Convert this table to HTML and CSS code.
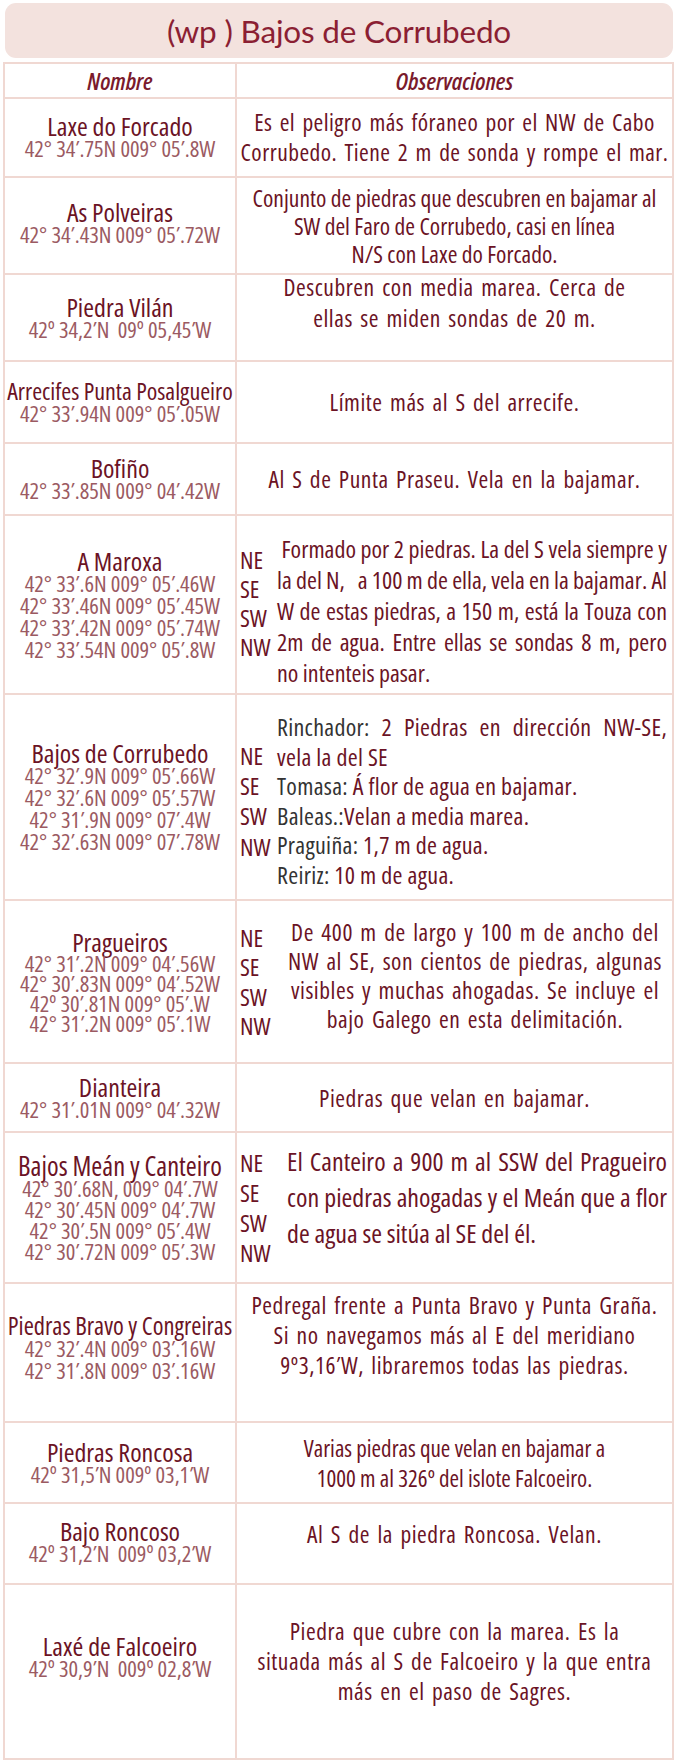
FILE: index.html
```html
<!DOCTYPE html>
<html lang="es">
<head>
<meta charset="utf-8">
<title>(wp ) Bajos de Corrubedo</title>
<link rel="stylesheet" href="styles.css">
</head>
<body>
<div class="page">
  <div class="title">(wp ) Bajos de Corrubedo</div>
  <div class="table">
    <div class="row head">
      <div class="cell name"><span class="hd">Nombre</span></div>
      <div class="cell obs center"><span class="hd">Observaciones</span></div>
    </div>

    <div class="row r1">
      <div class="cell name"><div class="nm">Laxe do Forcado</div><div class="co">42° 34′.75N 009° 05′.8W</div></div>
      <div class="cell obs center"><p>Es el peligro más fóraneo por el NW de Cabo<br>Corrubedo. Tiene 2 m de sonda y rompe el mar.</p></div>
    </div>

    <div class="row r2">
      <div class="cell name"><div class="nm">As Polveiras</div><div class="co">42° 34′.43N 009° 05′.72W</div></div>
      <div class="cell obs center"><p>Conjunto de piedras que descubren en bajamar al<br>SW del Faro de Corrubedo, casi en línea<br>N/S con Laxe do Forcado.</p></div>
    </div>

    <div class="row r3">
      <div class="cell name"><div class="nm">Piedra Vilán</div><div class="co">42º 34,2′N&nbsp; 09º 05,45′W</div></div>
      <div class="cell obs center top"><p>Descubren con media marea. Cerca de<br>ellas se miden sondas de 20 m.</p></div>
    </div>

    <div class="row r4">
      <div class="cell name"><div class="nm">Arrecifes Punta Posalgueiro</div><div class="co">42° 33′.94N 009° 05′.05W</div></div>
      <div class="cell obs center"><p>Límite más al S del arrecife.</p></div>
    </div>

    <div class="row r5">
      <div class="cell name"><div class="nm">Bofiño</div><div class="co">42° 33′.85N 009° 04′.42W</div></div>
      <div class="cell obs center"><p>Al S de Punta Praseu. Vela en la bajamar.</p></div>
    </div>

    <div class="row r6">
      <div class="cell name"><div class="nm">A Maroxa</div><div class="co">42° 33′.6N 009° 05′.46W<br>42° 33′.46N 009° 05′.45W<br>42° 33′.42N 009° 05′.74W<br>42° 33′.54N 009° 05′.8W</div></div>
      <div class="cell obs split">
        <div class="dirs d6">NE<br>SE<br>SW<br>NW</div>
        <div class="txt t6">
          <span class="ln j">&nbsp;Formado por 2 piedras. La del S vela siempre y</span>
          <span class="ln j ws">la del N,&nbsp;&nbsp; a 100 m de ella, vela en la bajamar. Al</span>
          <span class="ln j">W de estas piedras, a 150 m, está la Touza con</span>
          <span class="ln j">2m de agua. Entre ellas se sondas 8 m, pero</span>
          <span class="ln">no intenteis pasar.</span>
        </div>
      </div>
    </div>

    <div class="row r7">
      <div class="cell name"><div class="nm">Bajos de Corrubedo</div><div class="co">42° 32′.9N 009° 05′.66W<br>42° 32′.6N 009° 05′.57W<br>42° 31′.9N 009° 07′.4W<br>42° 32′.63N 009° 07′.78W</div></div>
      <div class="cell obs split">
        <div class="dirs d7">NE<br>SE<br>SW<br>NW</div>
        <div class="txt t7">
          <span class="ln j"><span class="lab">Rinchador:</span> 2 Piedras en dirección NW-SE,</span>
          <span class="ln">vela la del SE</span>
          <span class="ln"><span class="lab">Tomasa:</span> Á flor de agua en bajamar.</span>
          <span class="ln"><span class="lab">Baleas.:</span>Velan a media marea.</span>
          <span class="ln"><span class="lab">Praguiña:</span> 1,7 m de agua.</span>
          <span class="ln"><span class="lab">Reiriz:</span> 10 m de agua.</span>
        </div>
      </div>
    </div>

    <div class="row r8">
      <div class="cell name"><div class="nm">Pragueiros</div><div class="co">42° 31′.2N 009° 04′.56W<br>42° 30′.83N 009° 04′.52W<br>42º 30′.81N 009° 05′.W<br>42° 31′.2N 009° 05′.1W</div></div>
      <div class="cell obs split">
        <div class="dirs d8">NE<br>SE<br>SW<br>NW</div>
        <div class="txt t8">De 400 m de largo y 100 m de ancho del<br>NW al SE, son cientos de piedras, algunas<br>visibles y muchas ahogadas. Se incluye el<br>bajo Galego en esta delimitación.</div>
      </div>
    </div>

    <div class="row r9">
      <div class="cell name"><div class="nm">Dianteira</div><div class="co">42° 31′.01N 009° 04′.32W</div></div>
      <div class="cell obs center"><p>Piedras que velan en bajamar.</p></div>
    </div>

    <div class="row r10">
      <div class="cell name"><div class="nm">Bajos Meán y Canteiro</div><div class="co">42° 30′.68N, 009° 04′.7W<br>42° 30′.45N 009° 04′.7W<br>42° 30′.5N 009° 05′.4W<br>42° 30′.72N 009° 05′.3W</div></div>
      <div class="cell obs split">
        <div class="dirs d10">NE<br>SE<br>SW<br>NW</div>
        <div class="txt t10">
          <span class="ln j">El Canteiro a 900 m al SSW del Pragueiro</span>
          <span class="ln j">con piedras ahogadas y el Meán que a flor</span>
          <span class="ln">de agua se sitúa al SE del él.</span>
        </div>
      </div>
    </div>

    <div class="row r11">
      <div class="cell name"><div class="nm">Piedras Bravo y Congreiras</div><div class="co">42° 32′.4N 009° 03′.16W<br>42° 31′.8N 009° 03′.16W</div></div>
      <div class="cell obs center"><p>Pedregal frente a Punta Bravo y Punta Graña.<br>Si no navegamos más al E del meridiano<br>9º3,16′W, libraremos todas las piedras.</p></div>
    </div>

    <div class="row r12">
      <div class="cell name"><div class="nm">Piedras Roncosa</div><div class="co">42º 31,5′N 009º 03,1′W</div></div>
      <div class="cell obs center"><p>Varias piedras que velan en bajamar a<br>1000 m al 326º del islote Falcoeiro.</p></div>
    </div>

    <div class="row r13">
      <div class="cell name"><div class="nm">Bajo Roncoso</div><div class="co">42º 31,2′N&nbsp; 009º 03,2′W</div></div>
      <div class="cell obs center"><p>Al S de la piedra Roncosa. Velan.</p></div>
    </div>

    <div class="row r14">
      <div class="cell name"><div class="nm">Laxé de Falcoeiro</div><div class="co">42º 30,9′N&nbsp; 009º 02,8′W</div></div>
      <div class="cell obs center"><p>Piedra que cubre con la marea. Es la<br>situada más al S de Falcoeiro y la que entra<br>más en el paso de Sagres.</p></div>
    </div>
  </div>
</div>
</body>
</html>
```

FILE: styles.css
```css
html, body {
  margin: 0;
  padding: 0;
  background: #ffffff;
}

body {
  font-family: "Open Sans", "DejaVu Sans Condensed", sans-serif;
  font-stretch: 75%;
  color: #6b1325;
}

.page {
  width: 680px;
  padding: 3px 0 0 3px;
  box-sizing: border-box;
}

.title {
  width: 668px;
  margin-left: 2px;
  height: 55px;
  background: #f3e2de;
  border-radius: 11px;
  display: flex;
  align-items: center;
  justify-content: center;
  font-family: Lato, "Open Sans", sans-serif;
  font-stretch: normal;
  font-size: 31.5px;
  color: #8b1f33;
  letter-spacing: -0.2px;
}

.table {
  margin-top: 4px;
  width: 671px;
  border-top: 2px solid #f0d8d2;
  border-left: 2px solid #f0d8d2;
  box-sizing: border-box;
}

.row {
  display: grid;
  grid-template-columns: 232px 1fr;
  box-sizing: border-box;
}

.cell {
  border-right: 2px solid #f0d8d2;
  border-bottom: 2px solid #f0d8d2;
  box-sizing: border-box;
  display: flex;
  align-items: center;
  min-width: 0;
}

.cell p {
  margin: 0;
  white-space: nowrap;
}

.name {
  flex-direction: column;
  justify-content: center;
  text-align: center;
  white-space: nowrap;
}

.nm {
  font-size: 26px;
  line-height: 24px;
  color: #6b1325;
}

.r4 .nm {
  font-size: 24px;
}

.r11 .nm {
  font-size: 24.5px;
}

.r10 .nm {
  font-size: 26.5px;
}

.co {
  font-size: 22.5px;
  line-height: 22px;
  color: #9b5a62;
}

.r8 .co {
  line-height: 20px;
}

.r10 .co {
  line-height: 21px;
}

.r2 .name {
  padding-bottom: 6px;
}

.r11 .name {
  padding-bottom: 10px;
}

.r13 .name {
  padding-bottom: 4px;
}

.r14 .name {
  padding-bottom: 30px;
}

.hd {
  font-style: italic;
  font-weight: 600;
  font-size: 24px;
  letter-spacing: 0;
  word-spacing: 0;
  color: #7a1a2c;
}

.obs {
  font-size: 23.5px;
  letter-spacing: 0.55px;
  word-spacing: 2.5px;
  line-height: 30px;
  color: #6b1325;
}

.r1 .obs {
  letter-spacing: 0.45px;
}

.r2 .obs {
  letter-spacing: 0;
  word-spacing: 0;
  line-height: 28px;
}

.r12 .obs {
  font-size: 23px;
  letter-spacing: 0;
  word-spacing: 0;
}

.r11 .obs {
  padding-bottom: 36px;
}

.r13 .obs {
  padding-bottom: 20px;
}

.r14 .obs {
  padding-bottom: 22px;
}

.center {
  justify-content: center;
  text-align: center;
}

.top {
  align-items: flex-start;
}

.top p {
  margin-top: -3px;
  line-height: 31px;
}

.split {
  align-items: stretch;
  padding: 0 5px 0 3px;
  letter-spacing: 0;
  word-spacing: 0;
}

.dirs {
  width: 37px;
  flex: none;
  font-size: 24px;
  line-height: 29px;
  color: #6b1325;
  display: flex;
  flex-direction: column;
  justify-content: flex-start;
}

.txt {
  flex: 1;
  display: flex;
  flex-direction: column;
  justify-content: flex-start;
  white-space: nowrap;
}

.ln {
  display: block;
  white-space: pre;
}

.ln.j {
  white-space: normal;
  text-align: justify;
  text-align-last: justify;
}

.ln.ws {
  word-spacing: -2.5px;
}

.lab {
  color: #333333;
}

.t6 {
  font-size: 24px;
  padding-top: 17px;
}

.t6 .ln {
  line-height: 31px;
}

.d6 {
  padding-top: 29px;
  line-height: 29px;
}

.t7 {
  font-size: 24px;
  letter-spacing: 0.3px;
  padding-top: 17px;
}

.t7 .ln {
  line-height: 29.6px;
}

.d7 {
  padding-top: 46px;
  line-height: 30.2px;
}

.t8 {
  justify-content: center;
  text-align: center;
  font-size: 23.5px;
  letter-spacing: 0.55px;
  word-spacing: 2.5px;
  line-height: 28.8px;
  padding-left: 6px;
  padding-bottom: 11px;
}

.d8 {
  justify-content: center;
  line-height: 29.5px;
}

.t10 {
  font-size: 26px;
  padding-top: 10px;
  padding-left: 10px;
}

.t10 .ln {
  line-height: 36px;
}

.d10 {
  padding-top: 15px;
  line-height: 30px;
}

.head { height: 34px; }
.r1 { height: 80px; }
.r2 { height: 97px; }
.r3 { height: 87px; }
.r4 { height: 82px; }
.r5 { height: 72px; }
.r6 { height: 179px; }
.r7 { height: 206px; }
.r8 { height: 163px; }
.r9 { height: 69px; }
.r10 { height: 151px; }
.r11 { height: 139px; }
.r12 { height: 81px; }
.r13 { height: 81px; }
.r14 { height: 175px; }
```
